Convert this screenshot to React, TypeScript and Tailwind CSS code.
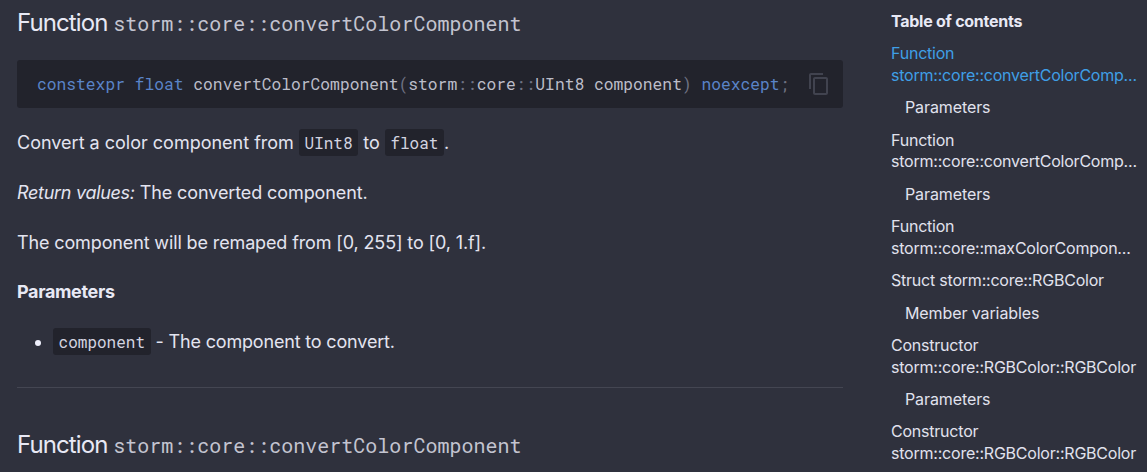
const mono = "font-['Roboto_Mono','Liberation_Mono',monospace]";

function Code({ children }: { children: string }) {
  return (
    <code className={`${mono} bg-[#22232c] rounded-[3px] px-[5.6px] py-[3px] text-[16px] tracking-normal text-[#d3d4e0]`}>{children}</code>
  );
}

function Heading({ className = "" }: { className?: string }) {
  return (
    <h2 className={`text-[24px] leading-[32px] tracking-[-0.9px] text-[#e8e9f5] ${className}`}>
      Function <span className={`${mono} text-[20px] tracking-normal text-[#c3c4d0]`}>storm::core::convertColorComponent</span>
    </h2>
  );
}

function TocLink({ title, sub, active }: { title: string; sub?: string; active?: boolean }) {
  return (
    <li className={active ? "text-[#3f9fe6]" : "text-[#e1e2ee]"}>
      <a className="block whitespace-nowrap tracking-[-0.22px]">
        {title}
        {sub && <br />}
        {sub}
      </a>
    </li>
  );
}

function TocChild({ label }: { label: string }) {
  return <li className="pl-[14px] text-[#e1e2ee] tracking-[-0.1px]">{label}</li>;
}

export default function App() {
  return (
    <div className="h-[472px] w-[1147px] overflow-hidden bg-[#2f313d] font-['Inter',sans-serif] flex text-[#e3e4f0]">
      <main className="w-[826px] ml-[17px] shrink-0 pt-[7px]">
        <Heading />
        <div className={`${mono} mt-[21px] h-[48px] bg-[#22232c] rounded-[3px] pl-[20px] pr-[12px] flex items-center justify-between text-[16.3px] text-[#bcbdc9]`}>
          <span>
            <span className="text-[#5a84c8]">constexpr float</span> convertColorComponent<span className="text-[#6f7283]">(</span>storm<span className="text-[#6f7283]">::</span>core<span className="text-[#6f7283]">::</span>UInt8 component<span className="text-[#6f7283]">)</span> <span className="text-[#5a84c8]">noexcept</span><span className="text-[#6f7283]">;</span>
          </span>
          <svg viewBox="0 0 24 24" className="w-[24px] h-[24px] fill-[#41434f]">
            <path d="M16 1H4c-1.1 0-2 .9-2 2v14h2V3h12V1zm3 4H8c-1.1 0-2 .9-2 2v14c0 1.1.9 2 2 2h11c1.1 0 2-.9 2-2V7c0-1.1-.9-2-2-2zm0 16H8V7h11v14z" />
          </svg>
        </div>
        <p className="mt-[21px] text-[18px] leading-[27px]">
          Convert a color component from <Code>UInt8</Code> to <Code>float</Code>.
        </p>
        <p className="mt-[23px] text-[18px] leading-[27px] tracking-[-0.1px]">
          <em className="tracking-[-0.3px]">Return values:</em> The converted component.
        </p>
        <p className="mt-[23px] text-[18px] leading-[27px] tracking-[-0.13px]">The component will be remaped from [0, 255] to [0, 1.f].</p>
        <h3 className="mt-[22px] text-[18px] leading-[27px] font-bold tracking-[-0.35px] text-[#e8e9f5]">Parameters</h3>
        <ul className="mt-[23px] pl-[36px] list-disc text-[18px] leading-[27px] tracking-[-0.17px] marker:text-[#eeeffb]">
          <li>
            <Code>component</Code> - The component to convert.
          </li>
        </ul>
        <hr className="mt-[32px] border-t border-[#444652]" />
        <Heading className="mt-[41px]" />
      </main>
      <aside className="ml-[48px] w-[245px] shrink-0 pt-[11px] text-[16px] leading-[21.5px]">
        <h4 className="font-bold text-[#e8e9f5] mb-[10.95px] tracking-[-0.26px]">Table of contents</h4>
        <ul className="flex flex-col gap-[10.95px]">
          <TocLink title="Function" sub="storm::core::convertColorComp..." active />
          <TocChild label="Parameters" />
          <TocLink title="Function" sub="storm::core::convertColorComp..." />
          <TocChild label="Parameters" />
          <TocLink title="Function" sub="storm::core::maxColorCompon..." />
          <TocLink title="Struct storm::core::RGBColor" />
          <TocChild label="Member variables" />
          <TocLink title="Constructor" sub="storm::core::RGBColor::RGBColor" />
          <TocChild label="Parameters" />
          <TocLink title="Constructor" sub="storm::core::RGBColor::RGBColor" />
        </ul>
      </aside>
    </div>
  );
}
